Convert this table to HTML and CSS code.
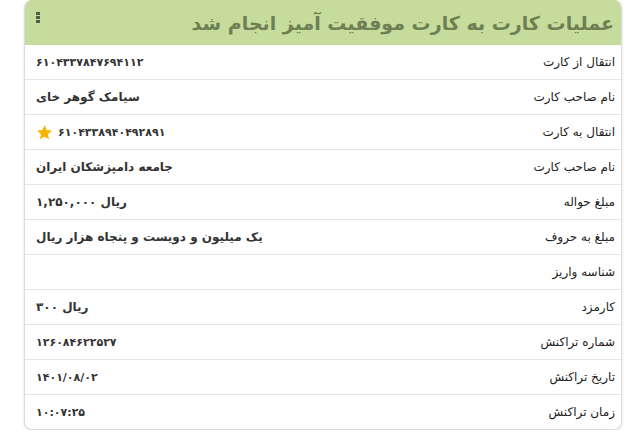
FILE: index.html
```html
<!DOCTYPE html>
<html lang="fa" dir="rtl">
<head>
<meta charset="utf-8">
<link rel="stylesheet" href="styles.css">
</head>
<body>
<div class="card">
  <div class="card-header">
    <h1 class="title">عملیات کارت به کارت موفقیت آمیز انجام شد</h1>
    <span class="kebab"><i></i><i></i><i></i></span>
  </div>
  <div class="rows">
    <div class="row"><div class="label">انتقال از کارت</div><div class="value num">۶۱۰۴۳۳۷۸۴۷۶۹۴۱۱۲</div></div>
    <div class="row"><div class="label">نام صاحب کارت</div><div class="value">سیامک گوهر خای</div></div>
    <div class="row"><div class="label">انتقال به کارت</div><div class="value num"><svg class="star" viewBox="0 0 24 24" width="17" height="17"><path d="M12 1.8l3.1 6.6 7.2.9-5.3 5 1.4 7.1L12 17.9l-6.4 3.5 1.4-7.1-5.3-5 7.2-.9z" fill="#f7b500"/></svg><span>۶۱۰۴۳۳۸۹۴۰۴۹۲۸۹۱</span></div></div>
    <div class="row"><div class="label">نام صاحب کارت</div><div class="value">جامعه دامپزشکان ایران</div></div>
    <div class="row"><div class="label">مبلغ حواله</div><div class="value">۱,۲۵۰,۰۰۰ ریال</div></div>
    <div class="row"><div class="label">مبلغ به حروف</div><div class="value">یک میلیون و دویست و پنجاه هزار ریال</div></div>
    <div class="row"><div class="label">شناسه واریز</div><div class="value"></div></div>
    <div class="row"><div class="label">کارمزد</div><div class="value">۳۰۰ ریال</div></div>
    <div class="row"><div class="label">شماره تراکنش</div><div class="value num">۱۲۶۰۸۴۶۲۲۵۲۷</div></div>
    <div class="row"><div class="label">تاریخ تراکنش</div><div class="value num">۱۴۰۱/۰۸/۰۲</div></div>
    <div class="row"><div class="label">زمان تراکنش</div><div class="value num">۱۰:۰۷:۲۵</div></div>
  </div>
</div>
</body>
</html>
```

FILE: styles.css
```css
html, body {
  margin: 0;
  padding: 0;
  background: #ffffff;
}
body {
  padding: 0 15px 0 24px;
  font-family: "DejaVu Sans", "Noto Sans", sans-serif;
  color: #222;
}
.card {
  direction: rtl;
  background: #fff;
  border: 1px solid #dcdcdc;
  border-top: 0;
  border-radius: 8px;
  box-shadow: 0 1px 3px rgba(0,0,0,0.12);
  overflow: hidden;
}
.card-header {
  height: 45px;
  background: #c6dc9d;
  display: flex;
  align-items: center;
  justify-content: space-between;
  padding: 0 7px 0 11px;
}
.title {
  margin: 0;
  font-size: 19px;
  font-weight: bold;
  color: #6e7f52;
}
.kebab {
  display: flex;
  flex-direction: column;
  gap: 1px;
  align-self: flex-start;
  margin-top: 12px;
}
.kebab i {
  display: block;
  width: 4px;
  height: 3px;
  background: #555b4c;
}
.row {
  display: flex;
  align-items: center;
  height: 34px;
  border-bottom: 1px solid #e6e6e6;
}
.row:last-child {
  border-bottom: 0;
}
.label {
  padding-right: 6px;
  font-size: 12px;
  white-space: nowrap;
  color: #222;
}
.value {
  flex: 1;
  direction: ltr;
  text-align: left;
  padding-left: 11px;
  font-size: 12px;
  font-weight: bold;
  color: #333;
  display: flex;
  align-items: center;
  gap: 5px;
}
.value.num {
  font-size: 11px;
}
.star {
  display: block;
}
```
